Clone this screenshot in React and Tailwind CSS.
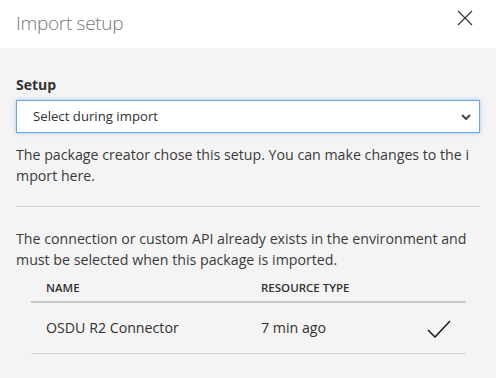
import React from 'react';

const font = { fontFamily: '"Open Sans", "Noto Sans", Arial, sans-serif' };

const App = () => {
  return (
    <div className="w-[496px] h-[378px] bg-[#f4f4f4] overflow-hidden text-[#323130]" style={font}>
      {/* Header */}
      <div className="h-[48px] bg-white flex items-center justify-between pl-4 pr-[23px]">
        <h1 className="text-[19px] font-light text-[#797775] tracking-[-0.3px] mt-[-2px]">Import setup</h1>
        <svg width="16" height="16" viewBox="0 0 16 16" className="text-[#323130] self-start mt-[10px]">
          <path d="M1 1 L15 15 M15 1 L1 15" stroke="currentColor" strokeWidth="1.1" fill="none" />
        </svg>
      </div>

      <div className="px-4 pt-[27px]">
        <label className="block text-[14px] font-bold leading-[20px] text-[#323130]">Setup</label>
        <div className="mt-[5px] h-[33px] bg-white border border-[#69a8e4] shadow-[0_0_4px_rgba(105,168,228,0.6)] flex items-center justify-between pl-[16px] pr-[8px]">
          <span className="text-[13.2px] text-[#323130]">Select during import</span>
          <svg width="10" height="6" viewBox="0 0 10 6">
            <path d="M1 1 L5 5 L9 1" stroke="#444" strokeWidth="2" fill="none" />
          </svg>
        </div>
        <p className="mt-[11px] text-[14.2px] leading-[21px] break-all text-[#3b3a39]">
          The package creator chose this setup. You can make changes to the import here.
        </p>

        <div className="mt-[20px] border-t border-[#d6d6d6]" />

        <p className="mt-[21px] text-[14.2px] leading-[21px] text-[#3b3a39]">
          The connection or custom API already exists in the environment and must be selected when this package is imported.
        </p>

        <div className="ml-[15px] mr-[14px]">
          <div className="h-[33px] flex items-end pb-[6px] border-b-2 border-[#c8c8c8] text-[11.5px] leading-[15px] font-semibold text-[#323130]">
            <div className="w-[230px] pl-[15px]">NAME</div>
            <div>RESOURCE TYPE</div>
          </div>
          <div className="h-[51px] flex items-center border-b border-[#d6d6d6] text-[14.2px] text-[#323130]">
            <div className="w-[230px] pl-[15px]">OSDU R2 Connector</div>
            <div className="flex-1">7 min ago</div>
            <svg width="24" height="18" viewBox="0 0 24 18" className="mr-[15px] mt-[2px]">
              <path d="M1 10 L8 17 L23 1" stroke="#201f1e" strokeWidth="1.6" fill="none" />
            </svg>
          </div>
        </div>
      </div>
    </div>
  );
};

export default App;
